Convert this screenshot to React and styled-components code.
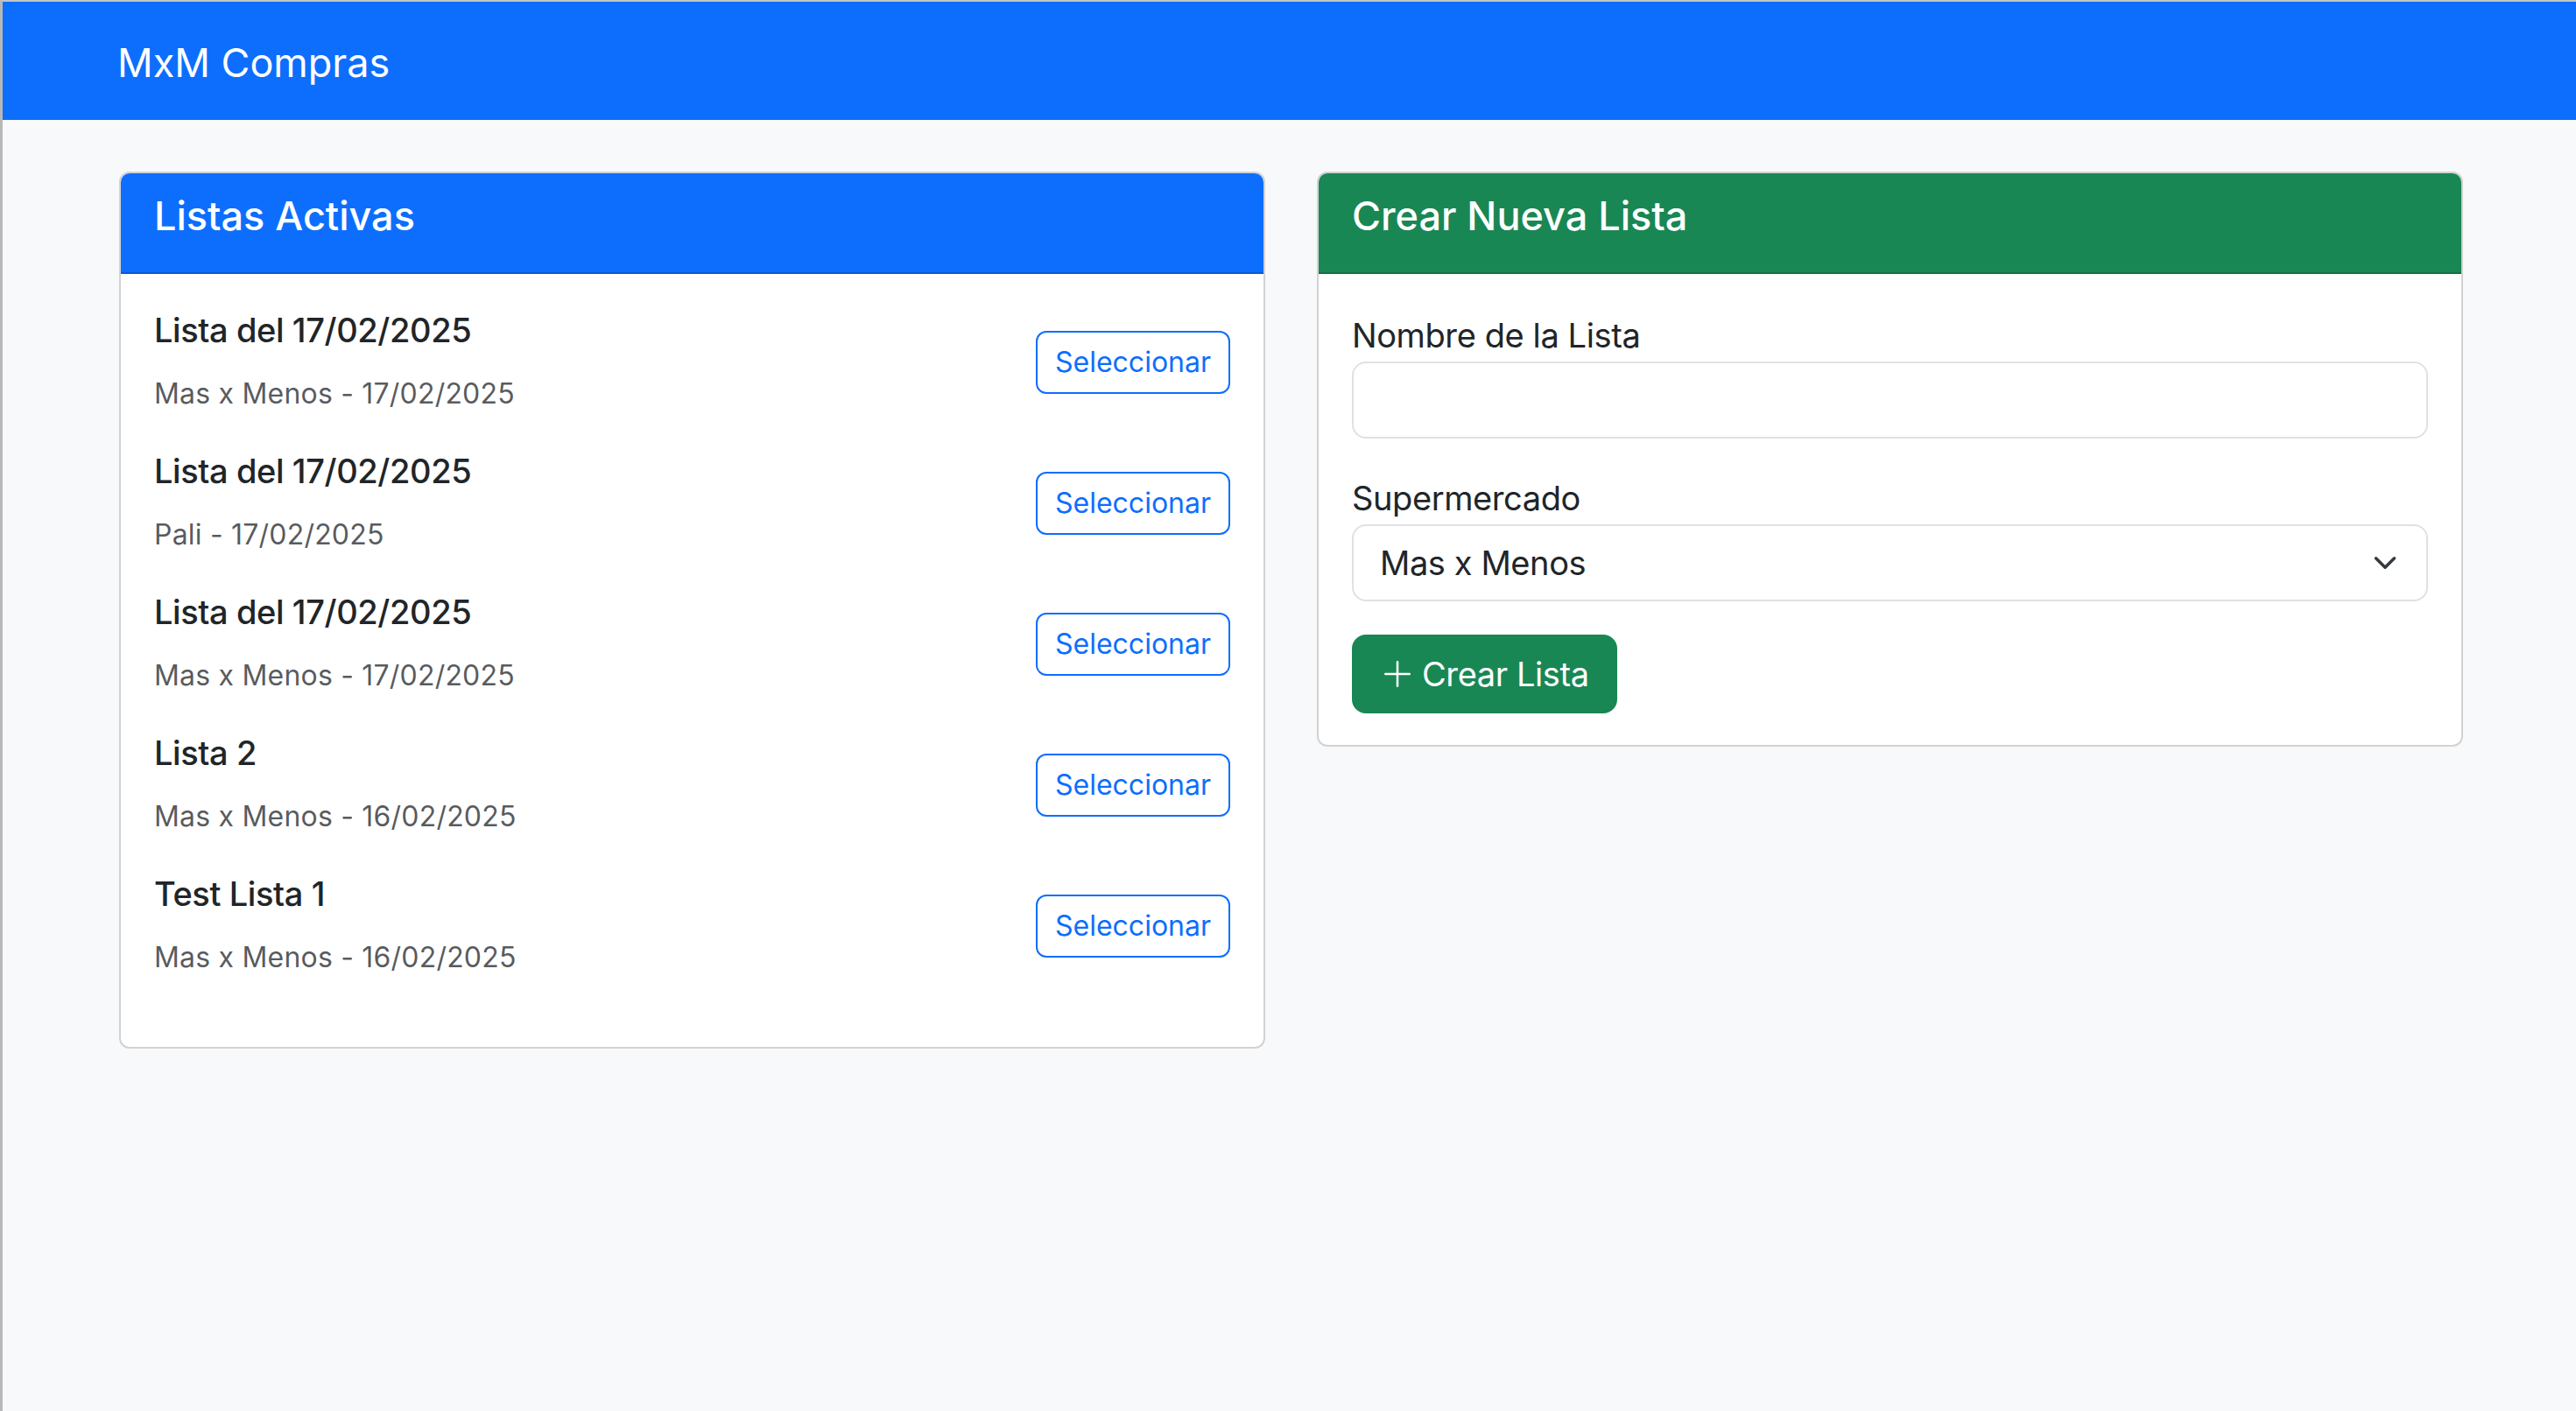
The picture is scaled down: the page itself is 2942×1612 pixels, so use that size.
import styled, { createGlobalStyle } from 'styled-components';

const listas = [
  { id: 1, nombre: 'Lista del 17/02/2025', super: 'Mas x Menos', fecha: '17/02/2025' },
  { id: 2, nombre: 'Lista del 17/02/2025', super: 'Pali', fecha: '17/02/2025' },
  { id: 3, nombre: 'Lista del 17/02/2025', super: 'Mas x Menos', fecha: '17/02/2025' },
  { id: 4, nombre: 'Lista 2', super: 'Mas x Menos', fecha: '16/02/2025' },
  { id: 5, nombre: 'Test Lista 1', super: 'Mas x Menos', fecha: '16/02/2025' },
];

function PlusIcon() {
  return (
    <svg width="40" height="40" viewBox="0 0 16 16" fill="currentColor">
      <path fillRule="evenodd" d="M8 2a.5.5 0 0 1 .5.5v5h5a.5.5 0 0 1 0 1h-5v5a.5.5 0 0 1-1 0v-5h-5a.5.5 0 0 1 0-1h5v-5A.5.5 0 0 1 8 2" />
    </svg>
  );
}

function App() {
  return (
    <Page>
      <GlobalStyle />
      <Navbar>
        <Brand>MxM Compras</Brand>
      </Navbar>
      <Main>
        <Card>
          <CardHeader $tone='#0d6efd'>
            <CardTitle>Listas Activas</CardTitle>
          </CardHeader>
          <CardBody $bottom='38px'>
            {listas.map((l) => (
              <ListItem key={l.id}>
                <div>
                  <ItemTitle>{l.nombre}</ItemTitle>
                  <ItemMeta>{l.super} - {l.fecha}</ItemMeta>
                </div>
                <OutlineButton>Seleccionar</OutlineButton>
              </ListItem>
            ))}
          </CardBody>
        </Card>

        <Card>
          <CardHeader $tone='#198754'>
            <CardTitle>Crear Nueva Lista</CardTitle>
          </CardHeader>
          <CardBody $bottom='36px'>
            <Field>
              <Label htmlFor='nombre'>Nombre de la Lista</Label>
              <Input id='nombre' type='text' />
            </Field>
            <Field>
              <Label htmlFor='super'>Supermercado</Label>
              <SelectWrap>
                <Select id='super' defaultValue='mxm'>
                  <option value='mxm'>Mas x Menos</option>
                  <option value='pali'>Pali</option>
                </Select>
                <Chevron width="28" height="28" viewBox="0 0 16 16">
                  <path d="m2 5 6 6 6-6" fill="none" stroke="#343a40" strokeWidth="2" strokeLinecap="round" strokeLinejoin="round" />
                </Chevron>
              </SelectWrap>
            </Field>
            <CreateButton>
              <PlusIcon />
              Crear Lista
            </CreateButton>
          </CardBody>
        </Card>
      </Main>
    </Page>
  );
}

export default App;


const GlobalStyle = createGlobalStyle`
  html, body {
    margin: 0;
    padding: 0;
  }
  body {
    background: #f8f9fa;
    font-family: Inter, "Noto Sans", sans-serif;
    color: #212529;
  }
  * {
    box-sizing: border-box;
  }
`

const Page = styled.div`
  min-height: 100vh;
  background: #f8f9fa;
  border-top: 2px solid #c4c4c4;
  border-left: 3px solid #b8b8b8;
`

const Navbar = styled.nav`
  height: 135px;
  background: #0d6efd;
  display: flex;
  align-items: center;
  padding: 4px 0 0 131px;
`

const Brand = styled.span`
  font-size: 45px;
  line-height: 1;
  color: #fff;
`

const Main = styled.main`
  display: grid;
  grid-template-columns: 1fr 1fr;
  gap: 59px;
  align-items: start;
  padding: 59px 129px 0 133px;
`

const Card = styled.section`
  background: #fff;
  border: 2px solid rgba(0, 0, 0, 0.175);
  border-radius: 12px;
  overflow: hidden;
`

const CardHeader = styled.div`
  background: ${(p) => p.$tone};
  border-bottom: 2px solid rgba(0, 0, 0, 0.175);
  padding: 21px 38px;
`

const CardTitle = styled.h4`
  margin: 0 0 16px;
  font-size: 45px;
  font-weight: 500;
  line-height: 55px;
  color: #fff;
`

const CardBody = styled.div`
  padding: 40px 38px ${(p) => p.$bottom};
`

const ListItem = styled.div`
  display: flex;
  justify-content: space-between;
  align-items: center;
  margin-bottom: 40px;
`

const ItemTitle = styled.h5`
  margin: 0 0 25px;
  font-size: 38px;
  font-weight: 500;
  letter-spacing: -0.4px;
  line-height: 48px;
  color: #212529;
`

const ItemMeta = styled.p`
  margin: 0;
  font-size: 32px;
  letter-spacing: 0.2px;
  line-height: 48px;
  color: rgba(33, 37, 41, 0.75);
`

const OutlineButton = styled.button`
  font-family: inherit;
  font-size: 32px;
  line-height: 48px;
  padding: 10px 20px;
  border: 2px solid #0d6efd;
  border-radius: 12px;
  background: transparent;
  color: #0d6efd;
  cursor: pointer;
`

const Field = styled.div`
  margin-bottom: 38px;
`

const Label = styled.label`
  display: block;
  font-size: 38px;
  letter-spacing: -0.4px;
  line-height: 60px;
  color: #212529;
`

const Input = styled.input`
  display: block;
  width: 100%;
  height: 88px;
  padding: 0 30px;
  font-family: inherit;
  font-size: 38px;
  color: #212529;
  background: #fff;
  border: 2px solid #dee2e6;
  border-radius: 16px;
  outline: none;
`

const SelectWrap = styled.div`
  position: relative;
`

const Select = styled.select`
  display: block;
  width: 100%;
  height: 88px;
  padding: 0 80px 0 30px;
  font-family: inherit;
  font-size: 38px;
  letter-spacing: -0.4px;
  color: #212529;
  background: #fff;
  border: 2px solid #dee2e6;
  border-radius: 16px;
  appearance: none;
  outline: none;
`

const Chevron = styled.svg`
  position: absolute;
  right: 35px;
  top: 50%;
  transform: translateY(-50%);
  pointer-events: none;
`

const CreateButton = styled.button`
  display: inline-flex;
  align-items: center;
  gap: 8px;
  padding: 13px 30px;
  font-family: inherit;
  font-size: 38px;
  letter-spacing: -0.4px;
  line-height: 60px;
  color: #fff;
  background: #198754;
  border: 2px solid #198754;
  border-radius: 16px;
  cursor: pointer;
`
